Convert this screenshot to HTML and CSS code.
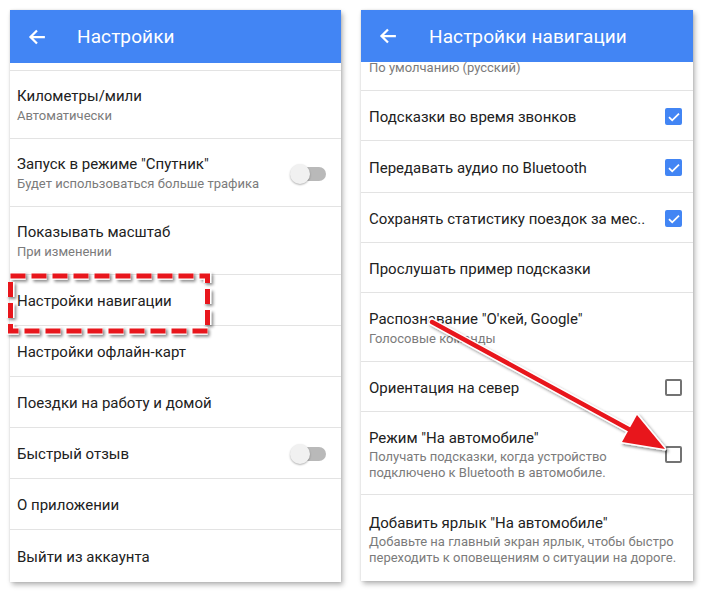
FILE: index.html
```html
<!DOCTYPE html>
<html lang="ru">
<head>
<meta charset="utf-8">
<link rel="stylesheet" href="styles.css">
</head>
<body>
<div class="page">
  <section class="panel left">
    <header class="appbar">
      <svg class="back" width="18" height="18" viewBox="0 0 16 16"><path d="M15 8H2.5M8 2.2L2.2 8 8 13.8" fill="none" stroke="#fff" stroke-width="2"/></svg>
      <h1>Настройки</h1>
    </header>
    <div class="stub"></div>
    <div class="row two"><div class="txt"><div class="t">Километры/мили</div><div class="s">Автоматически</div></div></div>
    <div class="row two"><div class="txt"><div class="t">Запуск в режиме "Спутник"</div><div class="s">Будет использоваться больше трафика</div></div><span class="toggle"></span></div>
    <div class="row two"><div class="txt"><div class="t">Показывать масштаб</div><div class="s">При изменении</div></div></div>
    <div class="row"><div class="txt"><div class="t">Настройки навигации</div></div></div>
    <div class="row"><div class="txt"><div class="t">Настройки офлайн-карт</div></div></div>
    <div class="row"><div class="txt"><div class="t">Поездки на работу и домой</div></div></div>
    <div class="row"><div class="txt"><div class="t">Быстрый отзыв</div></div><span class="toggle"></span></div>
    <div class="row"><div class="txt"><div class="t">О приложении</div></div></div>
    <div class="row last"><div class="txt"><div class="t">Выйти из аккаунта</div></div></div>
  </section>

  <section class="panel right">
    <header class="appbar">
      <svg class="back" width="18" height="18" viewBox="0 0 16 16"><path d="M15 8H2.5M8 2.2L2.2 8 8 13.8" fill="none" stroke="#fff" stroke-width="2"/></svg>
      <h1>Настройки навигации</h1>
    </header>
    <div class="row partial"><div class="s">По умолчанию (русский)</div></div>
    <div class="row"><div class="txt"><div class="t">Подсказки во время звонков</div></div><span class="cb on"><svg width="18" height="18" viewBox="0 0 18 18"><path d="M4 9.2l3.2 3.1L14 5.6" fill="none" stroke="#fff" stroke-width="1.8"/></svg></span></div>
    <div class="row r52"><div class="txt"><div class="t">Передавать аудио по Bluetooth</div></div><span class="cb on"><svg width="18" height="18" viewBox="0 0 18 18"><path d="M4 9.2l3.2 3.1L14 5.6" fill="none" stroke="#fff" stroke-width="1.8"/></svg></span></div>
    <div class="row"><div class="txt"><div class="t">Сохранять статистику поездок за мес..</div></div><span class="cb on"><svg width="18" height="18" viewBox="0 0 18 18"><path d="M4 9.2l3.2 3.1L14 5.6" fill="none" stroke="#fff" stroke-width="1.8"/></svg></span></div>
    <div class="row"><div class="txt"><div class="t">Прослушать пример подсказки</div></div></div>
    <div class="row two"><div class="txt"><div class="t">Распознавание "О'кей, Google"</div><div class="s">Голосовые команды</div></div></div>
    <div class="row"><div class="txt"><div class="t">Ориентация на север</div></div><span class="cb"></span></div>
    <div class="row three"><div class="txt"><div class="t">Режим "На автомобиле"</div><div class="s">Получать подсказки, когда устройство<br>подключено к Bluetooth в автомобиле.</div></div><span class="cb"></span></div>
    <div class="row three last"><div class="txt"><div class="t">Добавить ярлык "На автомобиле"</div><div class="s">Добавьте на главный экран ярлык, чтобы быстро<br>переходить к оповещениям о ситуации на дороге.</div></div></div>
  </section>
</div>

<svg class="annot" width="704" height="591" viewBox="0 0 704 591">
  <defs>
    <filter id="sh" x="-20%" y="-20%" width="140%" height="140%">
      <feDropShadow dx="2" dy="2" stdDeviation="1.5" flood-color="#000" flood-opacity="0.45"/>
    </filter>
  </defs>
  <g filter="url(#sh)">
    <rect x="10.5" y="276" width="197" height="55" fill="none" stroke="#fff" stroke-width="7.5" stroke-dasharray="15 6"/>
    <rect x="10.5" y="276" width="197" height="55" fill="none" stroke="#e8141b" stroke-width="5" stroke-dasharray="15 6"/>
  </g>
  <g filter="url(#sh)">
    <path d="M432 322 L634 432" stroke="#fff" stroke-width="7.5" stroke-linecap="round"/>
    <path d="M665 449 L622 442 L637 415 Z" fill="#fff" stroke="#fff" stroke-width="3" stroke-linejoin="round"/>
    <path d="M432 322 L634 432" stroke="#e8141b" stroke-width="4.5" stroke-linecap="round"/>
    <path d="M665 449 L622 442 L637 415 Z" fill="#e8141b"/>
  </g>
</svg>
</body>
</html>
```

FILE: styles.css
```css
* { box-sizing: border-box; margin: 0; padding: 0; }
html, body { background: #fff; }
body {
  width: 704px;
  height: 591px;
  overflow: hidden;
  font-family: Roboto, "Noto Sans", sans-serif;
  position: relative;
}
.page {
  display: flex;
  gap: 20px;
  padding: 10px 0 0 10px;
}
.panel {
  background: #fff;
  box-shadow: 2px 3px 5px rgba(0,0,0,0.28), 0 0 2px rgba(0,0,0,0.12);
  display: flex;
  flex-direction: column;
  overflow: hidden;
}
.left { width: 331px; height: 572px; }
.right { width: 332px; height: 571px; }
.appbar {
  background: #4285f4;
  height: 53px;
  display: flex;
  align-items: center;
  flex-shrink: 0;
  position: relative;
  z-index: 1;
}
.right .appbar { height: 52px; }
.back { margin-left: 18px; }
.appbar h1 {
  color: #fff;
  font-weight: 400;
  font-size: 19px;
  margin-left: 31px;
  letter-spacing: 0.1px;
}
.right .appbar h1 { margin-left: 32px; }
.stub { height: 8px; border-bottom: 1px solid #e3e3e3; flex-shrink: 0; }
.row {
  display: flex;
  align-items: center;
  justify-content: space-between;
  height: 51px;
  padding: 2px 11px 0 7px;
  border-bottom: 1px solid #e3e3e3;
  flex-shrink: 0;
}
.right .row { padding-left: 8px; height: 50px; }
.right .row.r52 { height: 52px; }
.row.two { height: 69px; }
.left .row.two { height: 68px; }
.left .row.two:first-of-type { height: 70px; }
.right .row.two { height: 69px; }
.right .row.three { height: 83px; }
.right .row.three.last { height: 86px; }
.row.last { border-bottom: none; }
.right .row.partial {
  height: 29px;
  align-items: flex-end;
  padding-top: 0;
  padding-bottom: 13px;
}
.t {
  font-size: 15px;
  line-height: 20px;
  color: #212121;
}
.s {
  font-size: 13px;
  line-height: 18px;
  color: #7b7b7b;
}
.two .s { margin-top: 1px; }
.three .s { line-height: 16px; margin-top: 1px; }
.toggle {
  position: relative;
  width: 34px;
  height: 14px;
  border-radius: 7px;
  background: #b9b9b9;
  margin-right: 4px;
}
.toggle::before {
  content: "";
  position: absolute;
  left: -2px;
  top: -3px;
  width: 20px;
  height: 20px;
  border-radius: 50%;
  background: #f1f1f1;
  box-shadow: 0 1px 2px rgba(0,0,0,0.3);
}
.cb {
  width: 17px;
  height: 17px;
  border: 2px solid #737373;
  border-radius: 2px;
  display: flex;
  align-items: center;
  justify-content: center;
  flex-shrink: 0;
}
.cb.on {
  background: #4285f4;
  border-color: #4285f4;
}
.cb svg { flex-shrink: 0; }
.annot {
  position: absolute;
  left: 0;
  top: 0;
  pointer-events: none;
}
```
